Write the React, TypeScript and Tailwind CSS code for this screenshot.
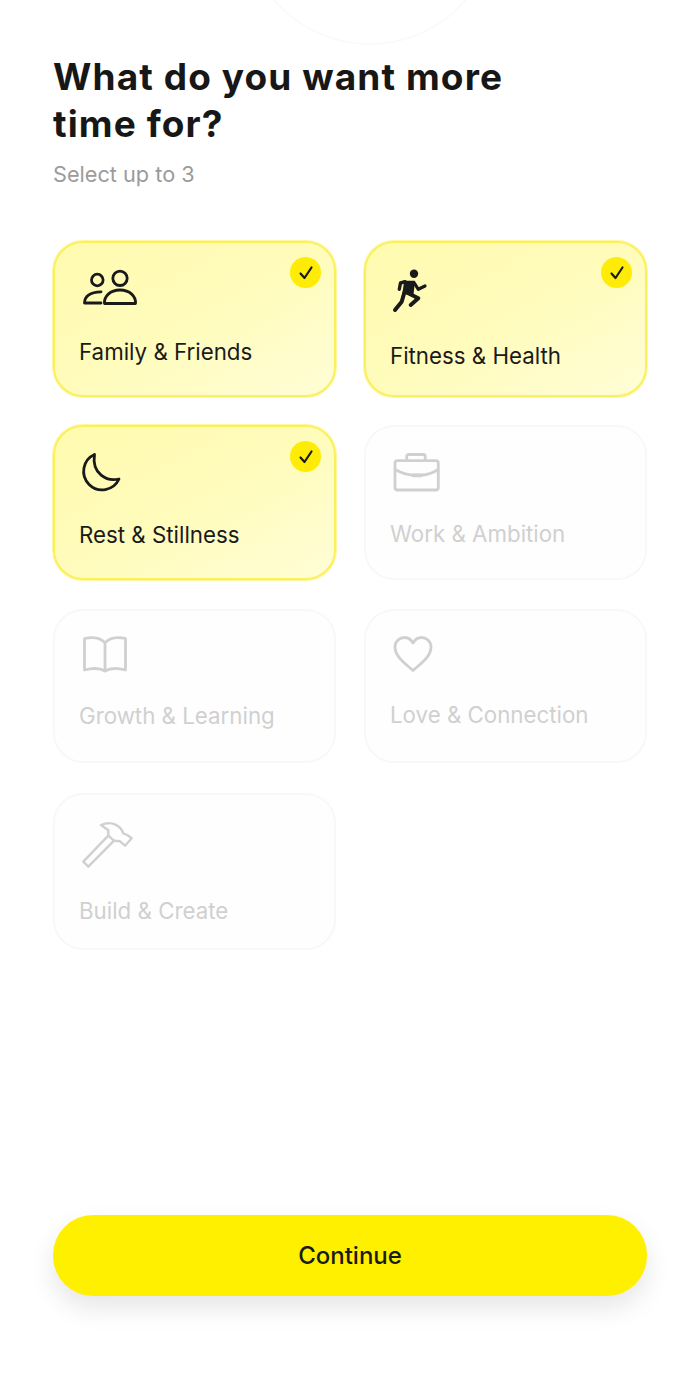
import React from "react";

const S = { fill: "none", stroke: "currentColor", strokeWidth: 2.8, strokeLinecap: "round", strokeLinejoin: "round" } as const;

const People = () => (
  <svg width="60" height="40" viewBox="0 0 60 40" {...S}>
    <circle cx="17.3" cy="15" r="5.8" />
    <circle cx="40" cy="13.3" r="7.2" />
    <path d="M21 38H4.5C4.5 32 9.5 26.8 21 26.8" />
    <path d="M24.5 38.5H55.5C56 31.5 50 25 40 25C30 25 24 31.5 24.5 38.5Z" />
  </svg>
);
const Runner = () => (
  <svg width="40" height="50" viewBox="0 0 40 50" fill="none" stroke="currentColor" strokeLinecap="round" strokeLinejoin="round">
    <circle cx="24" cy="8.7" r="4.2" fill="currentColor" stroke="none" />
    <path d="M15 16.7H24L22.5 29.5L13.5 28Z" fill="currentColor" strokeWidth="2" />
    <path d="M15 16.7L10.5 18L9.3 24.3" strokeWidth="3.4" />
    <path d="M24 17.5L28.3 24.3L35 21" strokeWidth="3.2" />
    <path d="M14.5 27L11.7 36.7L5 45" strokeWidth="4" />
    <path d="M18.3 28.3L28.3 33.3L20.7 40" strokeWidth="4" />
  </svg>
);
const Moon = () => (
  <svg width="44" height="44" viewBox="0 0 44 44" {...S}>
    <path d="M14.5 4.5A18.5 18.5 0 1 0 39 29C27 32 11.5 24 14.5 4.5Z" />
  </svg>
);
const Briefcase = () => (
  <svg width="52" height="44" viewBox="0 0 52 44" {...S}>
    <rect x="5" y="10.7" width="43.3" height="29.3" rx="2.5" />
    <path d="M16.7 10.7V6.5a2 2 0 0 1 2-2h14.5a2 2 0 0 1 2 2v4.2" />
    <path d="M5 19.5Q15 25 23 25H31Q40 25 48 19.5" />
    <path d="M23 25.5H31" strokeWidth="3.6" />
  </svg>
);
const Book = () => (
  <svg width="50" height="44" viewBox="0 0 50 44" {...S}>
    <path d="M25 11C21 6 13 4.5 4.5 6.5V38C12 36 20 36 25 39C30 36 38 36 45.5 38V6.5C37 4.5 29 6 25 11V39" />
  </svg>
);
const Heart = () => (
  <svg width="46" height="44" viewBox="0 0 46 44" {...S}>
    <path d="M23 38.5C16 32 5 25 5 15C5 9 10 5.5 14.5 5.5C18 5.5 21 7.5 23 11C25 7.5 28 5.5 31.5 5.5C36 5.5 41 9 41 15C41 25 30 32 23 38.5Z" />
  </svg>
);
const Hammer = () => (
  <svg width="54" height="52" viewBox="0 0 54 52" {...S} strokeWidth={2.4}>
    <path d="M3.3 43.7L8.3 48.7L34 22.7L28.3 17.7Z" />
    <path d="M34 22.7L40 23.3L45 27.7L51.7 20.3L47.3 17L43.3 15.3C41 8 32 2 21 7L28.3 12.3V17.7" />
  </svg>
);

const Card = ({ icon, label, on, cls }: { icon: React.ReactNode; label: string; on?: boolean; cls: string }) => (
  <div
    className={
      "relative flex flex-col pl-[24px] rounded-[30px] border-2 " +
      (on
        ? "border-[#faf05c] shadow-[0_0_0_1px_#fdf7a0] bg-gradient-to-br from-[#fffbb0] via-[#fffcbc] to-[#fffdd6] text-[#1a1a1a] "
        : "border-[#f8f8f8] bg-[#fefefe] text-[#d0d0d0] ") +
      cls
    }
  >
    {icon}
    <span className="text-[22.3px] leading-[30px] whitespace-nowrap">{label}</span>
    {on && (
      <div className="absolute right-[13px] top-[14px] w-[31px] h-[31px] rounded-full bg-[#feec06] flex items-center justify-center">
        <svg width="18" height="18" viewBox="0 0 18 18" fill="none" stroke="#1a1a1a" strokeWidth="2.2" strokeLinecap="round" strokeLinejoin="round">
          <path d="M3.5 9.5L7.5 14L14.5 3.5" />
        </svg>
      </div>
    )}
  </div>
);

export default function App() {
  return (
    <div className="relative w-[700px] h-[1381px] bg-white overflow-hidden font-['Inter',sans-serif] px-[53px] flex flex-col">
      <div className="absolute left-[243px] top-[-209px] w-[254px] h-[254px] rounded-full border-2 border-[#fafafa]" />
      <h1 className="mt-[53px] text-[37px] leading-[47px] font-bold text-[#171717] tracking-[1.1px]">
        What do you want more
        <br />
        time for?
      </h1>
      <p className="mt-[13px] text-[21.7px] leading-[28px] text-[#9b9b9b]">Select up to 3</p>
      <div className="mt-[53px] grid grid-cols-[283px_283px] gap-x-[28px] auto-rows-[184px]">
        <Card on cls="h-[156px] pt-[22px]" icon={<div className="h-[72px] ml-[1px]"><People /></div>} label="Family & Friends" />
        <Card on cls="h-[156px] pt-[22px]" icon={<div className="h-[76px]"><Runner /></div>} label="Fitness & Health" />
        <Card on cls="h-[155px] pt-[23px]" icon={<div className="h-[70px] ml-[1px]"><Moon /></div>} label="Rest & Stillness" />
        <Card cls="h-[155px] pt-[23px]" icon={<div className="h-[69px]"><Briefcase /></div>} label="Work & Ambition" />
        <Card cls="h-[154px] pt-[21px]" icon={<div className="h-[69px] ml-[1px]"><Book /></div>} label="Growth & Learning" />
        <Card cls="h-[154px] pt-[21px]" icon={<div className="h-[68px]"><Heart /></div>} label="Love & Connection" />
        <Card cls="h-[157px] pt-[23px]" icon={<div className="h-[78px] ml-[1px]"><Hammer /></div>} label="Build & Create" />
      </div>
      <button className="absolute left-[53px] top-[1215px] w-[594px] h-[81px] rounded-[40px] bg-[#fff000] text-[24px] font-medium text-[#1a1a1a] shadow-[0_12px_26px_rgba(0,0,0,0.1)]">
        Continue
      </button>
    </div>
  );
}
